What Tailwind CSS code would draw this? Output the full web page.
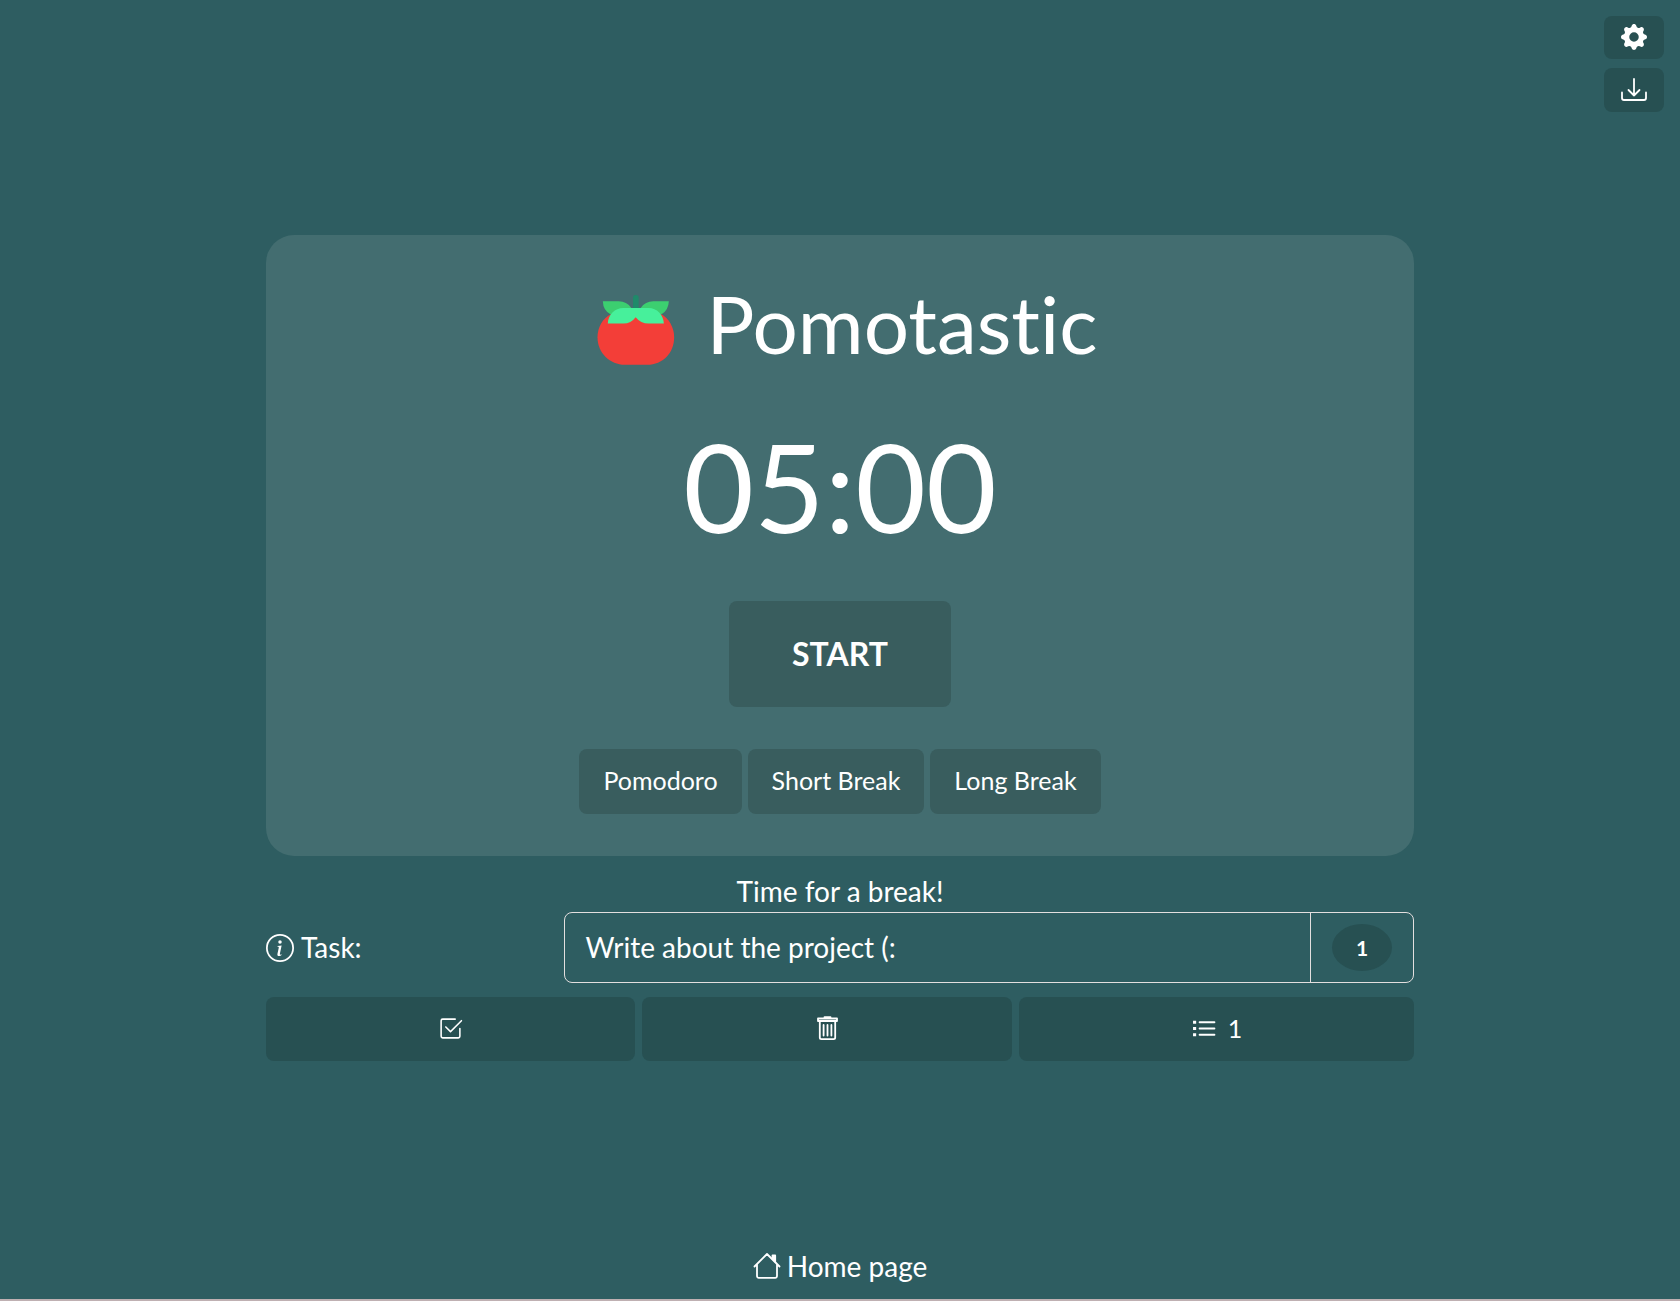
<!DOCTYPE html>
<html lang="en">
<head>
<meta charset="utf-8">
<meta name="viewport" content="width=device-width, initial-scale=1">
<title>Pomotastic</title>
<script src="https://cdn.jsdelivr.net/npm/@tailwindcss/browser@4"></script>
</head>
<body class="relative flex min-h-screen flex-col border-b-2 border-[#bfb0b2] bg-[#2e5d61] font-[Lato,sans-serif] text-[28px] leading-[42px] text-white">

<!-- Floating tools -->
<div class="absolute top-4 right-4 flex flex-col gap-[9px]">
  <button type="button" aria-label="Settings" class="flex h-[43px] w-[60px] items-center justify-center rounded-lg bg-[#275052] pb-[2px]">
    <svg class="size-[26px]" viewBox="0 0 16 16" fill="currentColor"><path d="M9.405 1.05c-.413-1.4-2.397-1.4-2.81 0l-.1.34a1.464 1.464 0 0 1-2.105.872l-.31-.17c-1.283-.698-2.686.705-1.987 1.987l.169.311c.446.82.023 1.841-.872 2.105l-.34.1c-1.4.413-1.4 2.397 0 2.81l.34.1a1.464 1.464 0 0 1 .872 2.105l-.17.31c-.698 1.283.705 2.686 1.987 1.987l.311-.169a1.464 1.464 0 0 1 2.105.872l.1.34c.413 1.4 2.397 1.4 2.81 0l.1-.34a1.464 1.464 0 0 1 2.105-.872l.31.17c1.283.698 2.686-.705 1.987-1.987l-.169-.311a1.464 1.464 0 0 1 .872-2.105l.34-.1c1.4-.413 1.4-2.397 0-2.81l-.34-.1a1.464 1.464 0 0 1-.872-2.105l.17-.31c.698-1.283-.705-2.686-1.987-1.987l-.311.169a1.464 1.464 0 0 1-2.105-.872zM8 10.93a2.929 2.929 0 1 1 0-5.86 2.929 2.929 0 0 1 0 5.858z"/></svg>
  </button>
  <button type="button" aria-label="Install" class="flex h-11 w-[60px] items-center justify-center rounded-lg bg-[#275052] pb-[2px]">
    <svg class="size-[26px]" viewBox="0 0 26 26" fill="none" stroke="currentColor" stroke-width="1.8" stroke-linecap="round" stroke-linejoin="round"><path d="M13 3v16.500M7.500 14l5.500 5.500 5.500-5.500M1 16.500V22a2 2 0 0 0 2 2h20a2 2 0 0 0 2-2v-5.500"/></svg>
  </button>
</div>

<main class="mx-auto w-full max-w-[1148px] pt-[235px]">
  <!-- Timer card -->
  <section class="flex flex-col items-center rounded-[28px] bg-[#436d70] pt-10 pb-[42px]">
    <h1 class="flex items-center gap-8 pl-[14px] text-[80px] leading-[96px] [font-variant-ligatures:none]">
      <svg class="mt-[14px] h-[70px] w-[78px]" viewBox="27 15 234 211">
        <path fill="#f33e38" d="M70 72C43 85 28 112 28 142c0 48 38 83 82 83h68c46 0 81-35 81-83 0-30-16-57-40-70z"/>
        <path fill="#3ccf70" d="M44 34h48q24 0 38 20l-20 15-43 4Q45 62 44 34zM243 34h-47q-24 0-38 20l20 15 43 4q21-12 22-39z"/>
        <rect fill="#1f8a6a" x="135" y="15" width="17" height="48" rx="8"/>
        <path fill="#47f09b" d="M59 101c1-27 21-47 47-47h76c25 0 45 20 46 47h-46q-24 0-39-19-14 19-37 19z"/>
      </svg>
      Pomotastic
    </h1>
    <p class="mt-[43px] text-[122px] leading-[144px]" role="timer">05:00</p>
    <button type="button" class="mt-[43px] h-[106px] w-[222px] rounded-lg bg-[#395d5e] text-[32px] font-bold">START</button>
    <div class="mt-[42px] flex gap-[6px] text-[25px]">
      <button type="button" class="h-[65px] rounded-lg bg-[#395d5e] px-6 pb-[3px]">Pomodoro</button>
      <button type="button" class="h-[65px] rounded-lg bg-[#395d5e] px-6 pb-[3px]">Short Break</button>
      <button type="button" class="h-[65px] rounded-lg bg-[#395d5e] px-6 pb-[3px]">Long Break</button>
    </div>
  </section>

  <p class="mt-[14px] text-center">Time for a break!</p>

  <!-- Current task -->
  <div class="grid grid-cols-[26%_1fr] items-center">
    <label for="task" class="flex items-center gap-[7px] pb-[2px]">
      <svg class="size-7 translate-y-px" viewBox="0 0 16 16" fill="currentColor"><path d="M8 15A7 7 0 1 1 8 1a7 7 0 0 1 0 14zm0 1A8 8 0 1 0 8 0a8 8 0 0 0 0 16z"/><path d="m8.930 6.588-2.290.287-.082.380.450.083c.294.070.352.176.288.469l-.738 3.468c-.194.897.105 1.319.808 1.319.545 0 1.178-.252 1.465-.598l.088-.416c-.200.176-.492.246-.686.246-.275 0-.375-.193-.304-.533L8.930 6.588zM9 4.500a1 1 0 1 1-2 0 1 1 0 0 1 2 0z"/></svg>
      Task:
    </label>
    <div class="flex h-[71px] rounded-lg border border-[#e3dfdf]">
      <input id="task" type="text" value="Write about the project (:" class="min-w-0 flex-1 bg-transparent px-5 pb-[2px] outline-none">
      <div class="flex items-center border-l border-[#e3dfdf] px-[21px]">
        <span class="flex h-[47px] w-[60px] items-center justify-center rounded-[50%] bg-[#275052] text-[21px] leading-none font-bold">1</span>
      </div>
    </div>
  </div>

  <!-- Task actions -->
  <div class="mt-[14px] grid grid-cols-[369fr_370fr_395fr] gap-[7px] text-[25px]">
    <button type="button" aria-label="Complete task" class="flex h-16 items-center justify-center rounded-lg bg-[#275052] pb-[2px]">
      <svg class="size-[25px]" viewBox="0 0 16 16" fill="currentColor"><path d="M3 14.500A1.500 1.500 0 0 1 1.500 13V3A1.500 1.500 0 0 1 3 1.500h8a.500.500 0 0 1 0 1H3a.500.500 0 0 0-.500.500v10a.500.500 0 0 0 .500.500h10a.500.500 0 0 0 .500-.500V8a.500.500 0 0 1 1 0v5a1.500 1.500 0 0 1-1.500 1.500H3z"/><path d="m8.354 10.354 7-7a.500.500 0 0 0-.708-.708L8 9.293 5.354 6.646a.500.500 0 1 0-.708.708l3 3a.500.500 0 0 0 .708 0z"/></svg>
    </button>
    <button type="button" aria-label="Delete task" class="flex h-16 items-center justify-center rounded-lg bg-[#275052] pb-[2px]">
      <svg class="size-[25px]" viewBox="0 0 25 25" fill="none" stroke="currentColor" stroke-width="1.800" stroke-linejoin="round"><path d="M3 2.500h19v2.500H3zM9.500 2.500V1.200h6v1.300M4.800 5.500V21.500a1.600 1.600 0 0 0 1.600 1.600h12.200a1.600 1.600 0 0 0 1.600-1.600V5.500"/><path stroke-linecap="round" d="M8.600 9v10.500M12.500 9v10.500M16.400 9v10.500"/></svg>
    </button>
    <button type="button" aria-label="Task list, 1 task" class="flex h-16 items-center justify-center gap-3 rounded-lg bg-[#275052] pb-[2px]">
      <svg class="size-[25px]" viewBox="0 0 16 16" fill="currentColor"><path d="M1.300 3h2v2h-2zM1.300 7h2v2h-2zM1.300 11h2v2h-2z"/><path fill="none" stroke="currentColor" stroke-width="1.200" stroke-linecap="round" d="M5.500 4H15M5.500 8H15M5.500 12H15"/></svg>
      1
    </button>
  </div>
</main>

<footer class="mt-auto flex justify-center pb-3">
  <a href="#" class="flex items-center gap-[6px]">
    <svg class="size-7" viewBox="0 0 28 28" fill="none" stroke="currentColor" stroke-width="1.800" stroke-linecap="round" stroke-linejoin="round"><path d="M1.500 14.500 14 2l12.500 12.500M4 12.500V24a1.800 1.800 0 0 0 1.800 1.800h16.400A1.800 1.800 0 0 0 24 24V12.500"/><path fill="currentColor" d="M19.500 3.500h2.700v6l-2.700-2.700z"/></svg>
    Home page
  </a>
</footer>
</body>
</html>
